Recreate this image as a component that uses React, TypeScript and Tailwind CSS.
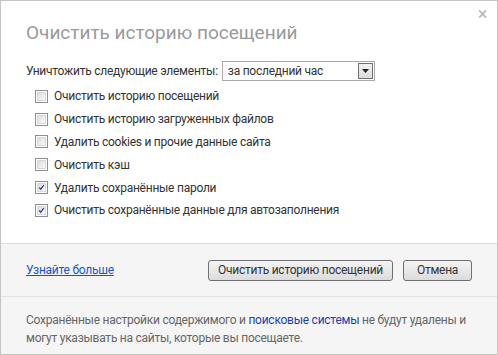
export default function App() {
  const items: { label: string; checked: boolean }[] = [
    { label: "Очистить историю посещений", checked: false },
    { label: "Очистить историю загруженных файлов", checked: false },
    { label: "Удалить cookies и прочие данные сайта", checked: false },
    { label: "Очистить кэш", checked: false },
    { label: "Удалить сохранённые пароли", checked: true },
    { label: "Очистить сохранённые данные для автозаполнения", checked: true },
  ];

  return (
    <div
      className="relative flex h-[355px] w-[498px] flex-col border border-[#c4c4c4] bg-white text-[12px] tracking-[-0.25px] text-[#333]"
      style={{ fontFamily: 'Roboto, "Noto Sans", sans-serif' }}
    >
      <button className="absolute right-[10px] top-[4px] text-[18px] leading-none text-[#b8b8b8]">×</button>

      <div className="flex flex-1 flex-col px-[25px] pt-[18px]">
        <h1 className="text-[19px] font-normal leading-[28px] tracking-normal text-[#9a9a9a]">
          Очистить историю посещений
        </h1>

        <div className="mt-[14px] flex h-[20px] items-center gap-[4px]">
          <span>Уничтожить следующие элементы:</span>
          <div className="flex h-[20px] w-[153px] items-center justify-between border border-[#a9a9a9] pl-[5px] pr-[1px]">
            <span>за последний час</span>
            <span className="flex h-[16px] w-[15px] items-center justify-center border border-[#707070] bg-gradient-to-b from-[#f2f2f2] to-[#dcdcdc]">
              <svg width="7" height="4" viewBox="0 0 7 4">
                <path d="M0 0h7L3.5 4z" fill="#222" />
              </svg>
            </span>
          </div>
        </div>

        <div className="mt-[4px] flex flex-col pl-[9px]">
          {items.map((it) => (
            <label key={it.label} className="flex h-[22.8px] items-center gap-[6px]">
              <span className="flex h-[13px] w-[13px] items-center justify-center border border-[#8f8f8f] bg-white">
                <span className="flex h-[9px] w-[9px] items-center justify-center border border-[#d8d8d8] bg-gradient-to-br from-[#dcdcdc] to-[#fafafa]">
                  {it.checked && (
                    <svg width="9" height="9" viewBox="0 0 9 9">
                      <path d="M1.5 4.5l2 2.2L7.5 1.5" stroke="#2a3f9a" strokeWidth="1.6" fill="none" />
                    </svg>
                  )}
                </span>
              </span>
              <span>{it.label}</span>
            </label>
          ))}
        </div>
      </div>

      <div className="flex h-[53px] items-center border-t border-[#dedede] bg-[#f5f5f5] px-[25px]">
        <a className="text-[#1555c9] underline">Узнайте больше</a>
        <div className="ml-auto flex gap-[10px]">
          <button className="h-[21px] w-[185px] rounded-[3px] border border-[#707070] bg-gradient-to-b from-[#f4f4f4] to-[#dcdcdc]">
            Очистить историю посещений
          </button>
          <button className="h-[21px] w-[69px] rounded-[3px] border border-[#707070] bg-gradient-to-b from-[#f4f4f4] to-[#dcdcdc]">
            Отмена
          </button>
        </div>
      </div>

      <div className="h-[58px] whitespace-nowrap border-t border-[#e2e2e2] bg-[#f5f5f5] px-[25px] pt-[14px] leading-[18px] text-[#666]">
        <p>
          Сохранённые настройки содержимого и <a className="text-[#1c3fb0]">поисковые системы</a> не будут удалены и
        </p>
        <p>могут указывать на сайты, которые вы посещаете.</p>
      </div>
    </div>
  );
}
